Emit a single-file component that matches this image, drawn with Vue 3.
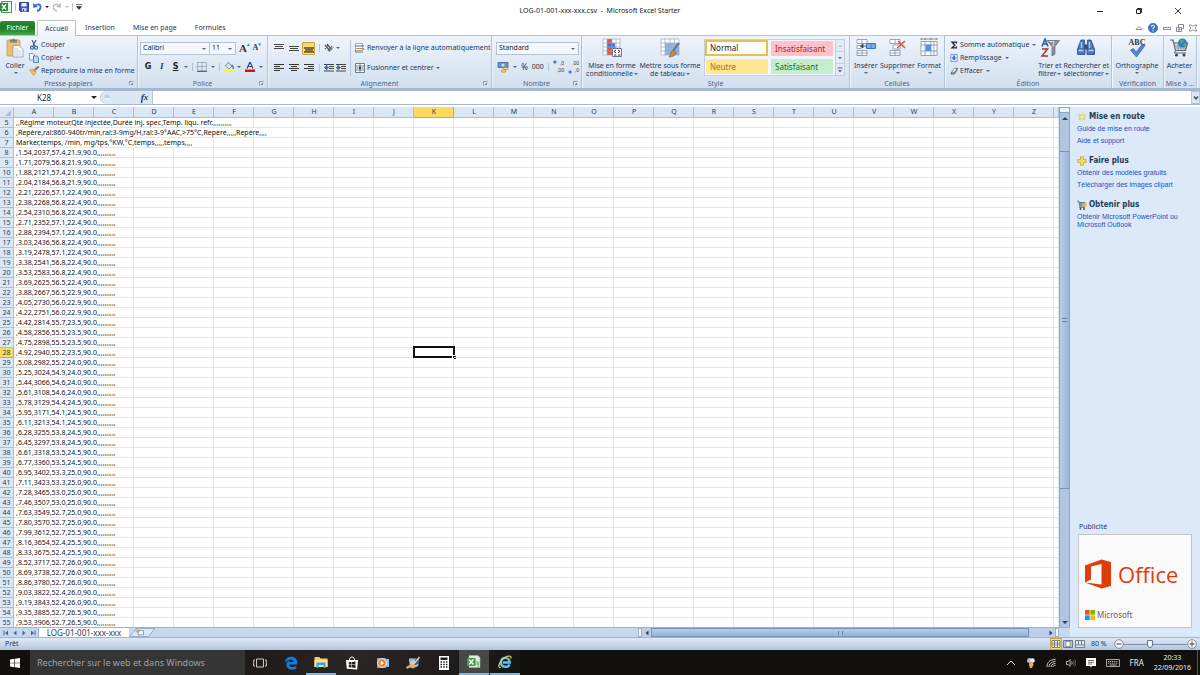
<script setup>
import { ref } from 'vue'

const columns = 'ABCDEFGHIJKLMNOPQRSTUVWXYZ'.split('')
const selectedColumn = 'K'
const selectedRow = 28

const headings = [
  { text: ',,Régime moteur,Qté injectée,Durée inj. spec,Temp. liqu. refr.,,,,,,,,,,', span: 6 },
  { text: ',Repère,ral:860-940tr/min,ral:3-9mg/H,ral:3-9°AAC,>75°C,Repère,,,,,Repère,,,,', span: 7 },
  { text: 'Marker,temps, /min, mg/tps,°KW,°C,temps,,,,,temps,,,,', span: 5 }
]
const measures = [
  '1.54,2037,57.4,21.9', '1.71,2079,56.8,21.9', '1.88,2121,57.4,21.9', '2.04,2184,56.8,21.9',
  '2.21,2226,57.1,22.4', '2.38,2268,56.8,22.4', '2.54,2310,56.8,22.4', '2.71,2352,57.1,22.4',
  '2.88,2394,57.1,22.4', '3.03,2436,56.8,22.4', '3.19,2478,57.1,22.4', '3.38,2541,56.8,22.4',
  '3.53,2583,56.8,22.4', '3.69,2625,56.5,22.4', '3.88,2667,56.5,22.9', '4.05,2730,56.0,22.9',
  '4.22,2751,56.0,22.9', '4.42,2814,55.7,23.5', '4.58,2856,55.5,23.5', '4.75,2898,55.5,23.5',
  '4.92,2940,55.2,23.5', '5.08,2982,55.2,24.0', '5.25,3024,54.9,24.0', '5.44,3066,54.6,24.0',
  '5.61,3108,54.6,24.0', '5.78,3129,54.4,24.5', '5.95,3171,54.1,24.5', '6.11,3213,54.1,24.5',
  '6.28,3255,53.8,24.5', '6.45,3297,53.8,24.5', '6.61,3318,53.5,24.5', '6.77,3360,53.5,24.5',
  '6.95,3402,53.3,25.0', '7.11,3423,53.3,25.0', '7.28,3465,53.0,25.0', '7.46,3507,53.0,25.0',
  '7.63,3549,52.7,25.0', '7.80,3570,52.7,25.0', '7.99,3612,52.7,25.5', '8.16,3654,52.4,25.5',
  '8.33,3675,52.4,25.5', '8.52,3717,52.7,26.0', '8.69,3738,52.7,26.0', '8.86,3780,52.7,26.0',
  '9.03,3822,52.4,26.0', '9.19,3843,52.4,26.0', '9.35,3885,52.7,26.5', '9.53,3906,52.7,26.5'
]
const rows = [
  ...headings,
  ...measures.map((m) => ({ text: `,${m},90.0,,,,,,,,,,`, span: 3 }))
].map((r, i) => ({ ...r, number: i + 5 }))

const cellName = ref('K28')
const formula = ref('')
const font = ref('Calibri')
const size = ref('11')
const format = ref('Standard')
const zoom = ref(40)
const search = ref('')
</script>

<template>
  <div class="desktop">
    <header class="titlebar">
      <div class="quick">
        <svg class="i12" viewBox="0 0 12 12"><rect x="1.5" y=".5" width="10" height="11" fill="#e9f4e7" stroke="#4d9a50" /><rect x="0" y="2" width="8" height="8" fill="#2f8b3b" /><path d="M2 3.5l4 5M6 3.5l-4 5" stroke="#fff" stroke-width="1.3" /></svg>
        <i class="vline"></i>
        <button aria-label="Enregistrer"><svg class="i10" viewBox="0 0 10 10"><path d="M.5.5h9v9h-8l-1-1z" fill="#4a55b8" stroke="#333c90" /><path d="M2.500 1h5v3.500h-5z" fill="#eef2fc" /><path d="M3 6h4.500v3.500H3z" fill="#c6cdea" /><path d="M4 7h1v2H4z" fill="#333c90" /></svg></button>
        <button aria-label="Annuler"><svg class="i10" viewBox="0 0 10 10"><path d="M2.500 4.500C5 1 9 2 8.500 5.500 8.200 7.500 6.500 8.800 5 9" fill="none" stroke="#3f6fc4" stroke-width="1.800" /><path d="M1 1l.3 5L6 4.800z" fill="#3f6fc4" /></svg></button>
        <i class="caret dark"></i>
        <button aria-label="Rétablir"><svg class="i10" viewBox="0 0 10 10"><path d="M7.500 4.500C5 1 1 2 1.500 5.500 1.800 7.500 3.500 8.800 5 9" fill="none" stroke="#b8c0cb" stroke-width="1.500" /><path d="M9 1l-.3 5L4 4.800z" fill="#b8c0cb" /></svg></button>
        <i class="caret pale"></i>
        <i class="vline"></i>
        <svg class="i6" viewBox="0 0 6 6"><path d="M0 .5h6M.5 2.500h5L3 5.500z" fill="#333" stroke="#333" stroke-width=".7" /></svg>
      </div>
      <h1>LOG-01-001-xxx-xxx.csv &nbsp;-&nbsp; Microsoft Excel Starter</h1>
      <div class="winctl">
        <button aria-label="Réduire"><svg class="i8" viewBox="0 0 8 8"><path d="M1 4.500h6" stroke="#222" /></svg></button>
        <button aria-label="Restaurer"><svg class="i8" viewBox="0 0 8 8"><path d="M1.500 2.500h4v4h-4zM2.500 2V1.500h4v4H6" fill="none" stroke="#222" /></svg></button>
        <button aria-label="Fermer"><svg class="i8" viewBox="0 0 8 8"><path d="M1 1l6 6M7 1L1 7" stroke="#222" stroke-width=".9" /></svg></button>
      </div>
    </header>

    <nav class="tabs">
      <button class="file">Fichier</button>
      <button class="tab on">Accueil</button>
      <button class="tab">Insertion</button>
      <button class="tab">Mise en page</button>
      <button class="tab">Formules</button>
      <div class="tabtools">
        <button aria-label="Réduire le ruban"><svg class="i8" viewBox="0 0 8 8"><path d="M1 5.500l3-3 3 3z" fill="#fff" stroke="#67727f" stroke-width=".8" /></svg></button>
        <button aria-label="Aide"><svg class="i10" viewBox="0 0 10 10"><circle cx="5" cy="5" r="4.700" fill="#3b74c9" stroke="#2d5ca8" stroke-width=".5" /><path d="M3.500 3.800C3.500 1.800 6.600 1.900 6.500 3.700 6.400 4.700 5 4.700 5 6M5 7v1.200" fill="none" stroke="#fff" stroke-width="1.100" /></svg></button>
        <button aria-label="Réduire le classeur"><svg class="i8" viewBox="0 0 8 8"><path d="M.5 3.500h7v2h-7z" fill="#fff" stroke="#67727f" stroke-width=".8" /></svg></button>
        <button aria-label="Restaurer le classeur"><svg class="i8" viewBox="0 0 8 8"><path d="M2.500 3V.5h5v4H5.500M.5 3.500h5v4h-5zM2 5h2v1H2z" fill="#fff" stroke="#67727f" stroke-width=".8" /></svg></button>
        <button aria-label="Fermer le classeur"><svg class="i8" viewBox="0 0 8 8"><path d="M.5 1h2L4 2.500 5.500 1h2v1L6 4l1.500 2v1h-2L4 5.500 2.500 7h-2V6L2 4 .5 2z" fill="#fff" stroke="#67727f" stroke-width=".8" /></svg></button>
      </div>
    </nav>

    <div class="ribbon">
      <section class="group g-clip">
        <div class="body">
          <button class="big"><svg class="i20" viewBox="0 0 20 20"><rect x="2" y="2" width="13" height="16" rx="1" fill="#efc06c" stroke="#c29243" stroke-width=".7" /><path d="M5 1.500h2l1.500-1 1.500 1h2v3H5z" fill="#7d8289" /><path d="M8 7.500h6l4 4V19H8z" fill="#fff" stroke="#7e8ea5" stroke-width=".7" /><path d="M9.500 11h4M9.500 13h7M9.500 15h7M9.500 17h7" stroke="#9fb4d4" stroke-width=".7" /></svg><span>Coller</span><i class="caret"></i></button>
          <div class="stack">
            <button><svg class="i10" viewBox="0 0 10 10"><path d="M3 0l3 6M7 0L4 6" stroke="#4b6184" stroke-width="1.200" /><circle cx="3" cy="7.700" r="1.500" fill="none" stroke="#3467b5" stroke-width="1.200" /><circle cx="7" cy="7.700" r="1.500" fill="none" stroke="#3467b5" stroke-width="1.200" /></svg>Couper</button>
            <button><svg class="i10" viewBox="0 0 10 10"><path d="M.5.5h3.500l1.500 1.500v5h-5z" fill="#eef5ff" stroke="#6788b9" stroke-width=".8" /><path d="M4.500 3h3.500L9.500 4.500v5h-5z" fill="#bfd7f8" stroke="#3f68a8" stroke-width=".8" /></svg>Copier<i class="caret"></i></button>
            <button><svg class="i10" viewBox="0 0 10 10"><path d="M9.500.5L6 4" stroke="#8c6a3d" stroke-width="1.800" /><path d="M4 2.500l3.500 3.500-2 1-3-2.500z" fill="#76849a" /><path d="M.5 4l3-1L7 6.500 4.500 9.500z" fill="#f2c44c" stroke="#b98f28" stroke-width=".5" /></svg>Reproduire la mise en forme</button>
          </div>
        </div>
        <footer>Presse-papiers<i class="launch"></i></footer>
      </section>

      <section class="group g-font">
        <div class="body lines">
          <div class="line">
            <span class="fields">
              <span class="pick w-font"><select v-model="font" aria-label="Police"><option>Calibri</option></select><i class="caret"></i></span>
              <span class="pick w-size"><select v-model="size" aria-label="Taille"><option>11</option></select><i class="caret"></i></span>
            </span>
            <button class="letter grow" aria-label="Agrandir">A<sup>▴</sup></button>
            <button class="letter shrink" aria-label="Rétrécir">A<sup>▾</sup></button>
          </div>
          <div class="line spread">
            <button class="fmt"><b>G</b></button>
            <button class="fmt"><em>I</em></button>
            <button class="fmt"><u>S</u></button><i class="caret"></i>
            <i class="vline"></i>
            <button aria-label="Bordures"><svg class="i10" viewBox="0 0 10 10"><path d="M.5.500h9v8h-9zM5 .5v8M.5 4.500h9" fill="none" stroke="#8fa0b5" stroke-width=".8" /><path d="M0 9.500h10" stroke="#444" stroke-width=".8" /></svg></button><i class="caret"></i>
            <i class="vline"></i>
            <button aria-label="Remplissage couleur"><svg class="i10" viewBox="0 0 10 10"><path d="M4 .5l4 3.500-3 3L1.500 4z" fill="#dbe8f9" stroke="#5573a5" stroke-width=".8" /><path d="M7.500 3c1.500.5 2 2 1.500 4" fill="none" stroke="#3262b0" stroke-width="1.200" /><path d="M0 7.500h10V10H0z" fill="#ff0" /></svg></button><i class="caret"></i>
            <button aria-label="Couleur de police"><svg class="i10" viewBox="0 0 10 10"><path d="M2 6.500L4.700.5h.6L8 6.500M3 4.500h4" fill="none" stroke="#2b4a86" stroke-width="1.200" /><path d="M0 7.500h10V10H0z" fill="#f00" /></svg></button><i class="caret"></i>
          </div>
        </div>
        <footer>Police<i class="launch"></i></footer>
      </section>

      <section class="group g-align">
        <div class="body">
          <div class="lines aligns">
            <div class="line">
              <button class="ab" aria-label="Haut"><svg class="i10" viewBox="0 0 10 10"><path d="M0 1.500h10M1 3.500h8M0 5.500h10" stroke="#444" /></svg></button>
              <button class="ab" aria-label="Milieu"><svg class="i10" viewBox="0 0 10 10"><path d="M0 3.500h10M1 5.500h8M0 7.500h10" stroke="#444" /></svg></button>
              <button class="ab pressed" aria-label="Bas"><svg class="i10" viewBox="0 0 10 10"><path d="M0 5h10M1 7h8M0 9h10" stroke="#5c4a1c" stroke-width="1.400" /></svg></button>
              <i class="vline"></i>
              <button aria-label="Orientation"><svg class="i10" viewBox="0 0 10 10"><path d="M1 2l5 6M3 1l5 6M1 6l3-4M4 8l4-5" stroke="#555" stroke-width="1.200" /><path d="M5 9l4.500-5" stroke="#889" /></svg></button><i class="caret"></i>
            </div>
            <div class="line">
              <button class="ab" aria-label="Gauche"><svg class="i10" viewBox="0 0 10 10"><path d="M0 1.500h10M0 3.500h6M0 5.500h10M0 7.500h6" stroke="#333" /></svg></button>
              <button class="ab" aria-label="Centrer"><svg class="i10" viewBox="0 0 10 10"><path d="M0 1.500h10M2 3.500h6M0 5.500h10M2 7.500h6" stroke="#333" /></svg></button>
              <button class="ab" aria-label="Droite"><svg class="i10" viewBox="0 0 10 10"><path d="M0 1.500h10M4 3.500h6M0 5.500h10M4 7.500h6" stroke="#333" /></svg></button>
              <i class="vline"></i>
              <button aria-label="Diminuer le retrait"><svg class="i10" viewBox="0 0 10 10"><path d="M0 1.500h10M5 3.500h5M5 5.500h5M0 8h10" stroke="#444" stroke-width="1.100" /><path d="M5 4.600H2M3 2.500L.5 4.600 3 6.700z" fill="#2f62b8" stroke="#2f62b8" /></svg></button>
              <button class="in" aria-label="Augmenter le retrait"><svg class="i10" viewBox="0 0 10 10"><path d="M0 1.500h10M5 3.500h5M5 5.500h5M0 8h10" stroke="#444" stroke-width="1.100" /><path d="M0 4.600h2M1.800 2.500l2.500 2.100-2.500 2.100z" fill="#2f62b8" stroke="#2f62b8" /></svg></button>
            </div>
          </div>
          <i class="vline tall"></i>
          <div class="lines">
            <div class="line"><button class="txt"><svg class="i10" viewBox="0 0 10 10"><path d="M.5.500h7v9h-7z" fill="#fff" stroke="#8293a9" stroke-width=".7" /><path d="M0 3h9M0 8h7" stroke="#53637b" stroke-width="1.200" /><path d="M1 5.500h7.500v1.500" fill="none" stroke="#d28a42" stroke-width="1.200" /></svg>Renvoyer à la ligne automatiquement</button></div>
            <div class="line"><button class="txt"><svg class="i10" viewBox="0 0 10 10"><path d="M.5.500h9v9h-9zM.5 3h9M.5 7h9M5 .5V3M5 7v2.500" fill="#fff" stroke="#53637b" stroke-width=".8" /><path d="M1.500 5h2M8.500 5h-2" stroke="#2f62b8" /><path d="M4 3.500h2v3H4z" fill="#444" /></svg>Fusionner et centrer<i class="caret"></i></button></div>
          </div>
        </div>
        <footer>Alignement<i class="launch"></i></footer>
      </section>

      <section class="group g-num">
        <div class="body lines">
          <div class="line"><span class="pick w-num"><select v-model="format" aria-label="Format de nombre"><option>Standard</option></select><i class="caret"></i></span></div>
          <div class="line spread">
            <button aria-label="Format comptabilité"><svg class="i12" viewBox="0 0 12 12"><path d="M1 1.500h10v5H1z" fill="#6b8fd0" stroke="#3c5fa5" stroke-width=".8" /><circle cx="6" cy="4" r="1.500" fill="#d8e4fa" /><ellipse cx="8.500" cy="7.500" rx="2.500" ry="1.300" fill="#f7d56c" stroke="#a87b16" stroke-width=".6" /><ellipse cx="6.500" cy="10" rx="2.500" ry="1.300" fill="#f7d56c" stroke="#a87b16" stroke-width=".6" /></svg></button><i class="caret"></i>
            <button class="sym">%</button><button class="sym small">000</button>
            <i class="vline"></i>
            <button aria-label="Ajouter une décimale" class="dec"><svg class="i4" viewBox="0 0 4 4"><path d="M4 2H2M2 .5L.5 2 2 3.500z" fill="#2f62b8" stroke="#2f62b8" stroke-width=".8" /></svg><span class="digits"><span>,0</span><span>,00</span></span></button>
            <button aria-label="Réduire les décimales" class="dec low"><svg class="i4" viewBox="0 0 4 4"><path d="M0 2h2M2 .5L3.500 2 2 3.500z" fill="#2f62b8" stroke="#2f62b8" stroke-width=".8" /></svg><span class="digits"><span>,00</span><span>,0</span></span></button>
          </div>
        </div>
        <footer>Nombre<i class="launch"></i></footer>
      </section>

      <section class="group g-style">
        <div class="body">
          <button class="big wide"><svg class="i20" viewBox="0 0 20 20"><path d="M1 1h17v16H1z" fill="#fff" /><path d="M5 1h5v4H5zM5 13h5v4H5z" fill="#e8513f" /><path d="M5 5h8v4H5z" fill="#3f73d4" /><path d="M5 9h9v4H5z" fill="#e8513f" /><path d="M1 1h17v16H1zM1 5h17M1 9h17M1 13h17M5 1v16M10 1v16M14 1v16" fill="none" stroke="#9aaac2" stroke-width=".7" /><path d="M10.500 10.500h9v8h-9z" fill="#fff" stroke="#6d7886" /><path d="M14 12l-2 1.500 2 1.500M16 12l2 1.500-2 1.500M12 17h2.500M16 17h2.500" fill="none" stroke="#333" /></svg><span>Mise en forme<br>conditionnelle<i class="caret"></i></span></button>
          <button class="big wide"><svg class="i20" viewBox="0 0 20 20"><path d="M1 1h18v16H1z" fill="#fff" /><path d="M5 5h14v12H5z" fill="#8cb2ec" /><path d="M1 1h18v16H1zM1 5h18M1 9h18M1 13h18M5 1v16M10 1v16M14.500 1v16" fill="none" stroke="#9aaac2" stroke-width=".7" /><path d="M19 5l-6 8" stroke="#69717d" stroke-width="2" /><path d="M13 12l3 2c0 4-4 5-7 5 2-2 1-5 4-7z" fill="#c08c42" stroke="#7b6037" stroke-width=".6" /></svg><span>Mettre sous forme<br>de tableau<i class="caret"></i></span></button>
          <div class="gallery">
            <div class="swatches">
              <button class="sw normal">Normal</button><button class="sw bad">Insatisfaisant</button>
              <button class="sw neutral">Neutre</button><button class="sw good">Satisfaisant</button>
            </div>
            <div class="gscroll"><button aria-label="Précédent"><i class="caret up pale"></i></button><button aria-label="Suivant"><i class="caret"></i></button><button aria-label="Plus"><svg class="i6" viewBox="0 0 6 6"><path d="M.5 1h5" stroke="#53647d" /><path d="M1 3h4L3 5.200z" fill="#53647d" /></svg></button></div>
          </div>
        </div>
        <footer>Style</footer>
      </section>

      <section class="group g-cells">
        <div class="body even">
          <button class="big"><svg class="i20" viewBox="0 0 20 20"><path d="M1 1.500h10v4H1zM1 12.500h10v5H1zM6 1.500v4M6 12.500v5M1 15h10M1 7.500h4v3H1z" fill="#fff" stroke="#8291a6" stroke-width=".8" /><path d="M10.500 5.500h9v5h-9z" fill="#80aaf0" stroke="#416fb8" /><path d="M15 5.500v5" stroke="#416fb8" stroke-width=".7" /><path d="M10 8H6M7 6L4.500 8 7 10z" fill="#444" stroke="#444" stroke-width=".8" /></svg><span>Insérer</span><i class="caret"></i></button>
          <button class="big"><svg class="i20" viewBox="0 0 20 20"><path d="M3 1.500h10v4H3zM3 12.500h10v5H3zM8 1.500v4M8 12.500v5M3 15h10M6 7h7v4H6z" fill="#fff" stroke="#8291a6" stroke-width=".8" /><path d="M11 3l7 7M18 3l-8 7" stroke="#ec4b35" stroke-width="1.500" /></svg><span>Supprimer</span><i class="caret"></i></button>
          <button class="big"><svg class="i20" viewBox="0 0 20 20"><path d="M2 3.500h16v14H2zM2 7h16M2 13h16M6 3.500v14M12 3.500v14M15 3.500v14" fill="#fff" stroke="#8291a6" stroke-width=".8" /><path d="M6.500 6.500h5.500v6.500H6.500z" fill="#5d8ee2" /><path d="M2 1h16M2 0v2M18 0v2M6 0v2M12 0v2" stroke="#667" stroke-width=".7" /></svg><span>Format</span><i class="caret"></i></button>
        </div>
        <footer>Cellules</footer>
      </section>

      <section class="group g-edit">
        <div class="body">
          <div class="stack">
            <button><svg class="i8" viewBox="0 0 10 10"><path d="M8 3V1.500H2.500L6 5 2.500 8.500H8V7" fill="none" stroke="#222" stroke-width="1.600" /></svg>Somme automatique<i class="caret"></i></button>
            <button><svg class="i8" viewBox="0 0 10 10"><path d="M1 .5h8v9H1z" fill="#dce9fb" stroke="#4d74b5" stroke-width=".8" /><path d="M4 2h2v2.500h2L5 8 2 4.500h2z" fill="#2f66ce" /></svg>Remplissage<i class="caret"></i></button>
            <button><svg class="i8" viewBox="0 0 10 10"><path d="M5.500 1.500h3.500L5.500 7.500H1.500z" fill="#fff" stroke="#444d5c" stroke-width=".8" /><path d="M1.500 7.500v1.500h4l3.500-5V1.500L5.500 7.500z" fill="#c3cbd7" stroke="#444d5c" stroke-width=".8" /></svg>Effacer<i class="caret"></i></button>
          </div>
          <button class="big"><svg class="i20" viewBox="0 0 20 20"><path d="M2 8.500L5 1l3 7.500M3 6h4" fill="none" stroke="#2b56ad" stroke-width="1.500" /><path d="M2 11h5.500L2 18h6" fill="none" stroke="#a23b36" stroke-width="1.500" /><path d="M7 2.500h12.500L15 8.500V16l-3 2V8.500z" fill="#8d929a" stroke="#5e646d" stroke-width=".7" /><path d="M9 3.500h5l-1 5" fill="none" stroke="#d9dce1" /></svg><span>Trier et<br>filtrer<i class="caret"></i></span></button>
          <button class="big"><svg class="i20" viewBox="0 0 20 20"><path d="M5 2h3.500v3l.5 3v8.500H1.500V11zM15 2h-3.500v3l-.5 3v8.500h7.500V11z" fill="#4b77bb" stroke="#284a85" stroke-width=".8" /><path d="M8.500 6.500h3v5h-3z" fill="#284a85" /><path d="M2.500 12.500h5M12.500 12.500h5M5.500 4v6M13.500 4v6" stroke="#b5d1f5" stroke-width="1.300" /></svg><span>Rechercher et<br>sélectionner<i class="caret"></i></span></button>
        </div>
        <footer>Édition</footer>
      </section>

      <section class="group g-check">
        <div class="body center"><button class="big abc"><small>ABC</small><svg class="i20" viewBox="0 0 20 20"><path d="M3.500 12l3-1.500L9 14l6.500-8L18 7.500 9.500 19z" fill="#4f86e0" stroke="#2f5fb5" stroke-width=".7" /></svg><span>Orthographe</span><i class="caret"></i></button></div>
        <footer>Vérification</footer>
      </section>
      <section class="group g-buy">
        <div class="body center"><button class="big"><svg class="i20" viewBox="0 0 20 20"><path d="M1 2h3l2.500 10.500h10L18.500 5H5" fill="#dfe4ea" stroke="#5f6772" stroke-width="1.200" /><path d="M6 8h12M7 10h10M9 5v7M12 5v7M15 5v7" stroke="#7d8590" stroke-width=".8" /><path d="M6.500 12.500L5.500 15H17" fill="none" stroke="#5f6772" /><circle cx="7.500" cy="17" r="1.500" fill="#444" /><circle cx="15" cy="17" r="1.500" fill="#444" /><circle cx="13.500" cy="5" r="4.500" fill="#2f7bd0" /><path d="M11 3c2-2 4-1 4 0s-2 1-2 2.500-2 0-2-2.500zM14 6l3-1c.5 2-1 3.500-2 4z" fill="#53b552" /></svg><span>Acheter</span><i class="caret"></i></button></div>
        <footer>Mise à ...</footer>
      </section>
    </div>

    <div class="formulabar">
      <input v-model="cellName" class="name" aria-label="Zone de nom">
      <button class="namedrop" aria-label="Liste des noms"><i class="caret dark"></i></button>
      <div class="fxbox"><span class="round"></span><button class="fx" aria-label="Insérer une fonction"><i>f</i>x</button></div>
      <input v-model="formula" class="formula" aria-label="Barre de formule">
      <button class="expand" aria-label="Développer"><svg class="i6" viewBox="0 0 6 6"><path d="M1 1.500l2 2.500 2-2.500" fill="none" stroke="#444" stroke-width="1.300" /></svg></button>
    </div>

    <main>
      <div class="book">
        <div class="sheetrow">
          <div class="sheet">
            <table>
              <colgroup><col class="c-num"><col v-for="c in columns" :key="c" class="c-col"><col></colgroup>
              <thead>
                <tr>
                  <th class="corner"><svg class="i6" viewBox="0 0 6 6"><path d="M6 0v6H0z" fill="#a9bdd6" /></svg></th>
                  <th v-for="c in columns" :key="c" scope="col" :class="{ hot: c === selectedColumn }">{{ c }}</th>
                  <th></th>
                </tr>
              </thead>
              <tbody>
                <tr v-for="r in rows" :key="r.number">
                  <th scope="row" :class="{ hot: r.number === selectedRow }">{{ r.number }}</th>
                  <td :colspan="r.span">{{ r.text }}</td>
                  <td v-for="c in columns.slice(r.span)" :key="c" :class="{ active: c === selectedColumn && r.number === selectedRow }"></td>
                  <td></td>
                </tr>
              </tbody>
            </table>
          </div>
          <div class="vscroll">
            <i class="split"></i>
            <button aria-label="Haut"><i class="caret up navy"></i></button>
            <i class="vgap1"></i><i class="vthumb"><b></b></i><i class="vgap2"></i>
            <button aria-label="Bas"><i class="caret navy"></i></button>
          </div>
        </div>
        <div class="sheettabs">
          <div class="tabside">
            <div class="navs">
              <button aria-label="Première feuille"><svg class="i6" viewBox="0 0 6 6"><path d="M1 .5v5" stroke="#46679b" /><path d="M5 .5v5L2 3z" fill="#46679b" /></svg></button>
              <button aria-label="Feuille précédente"><svg class="i6" viewBox="0 0 6 6"><path d="M4.500.5v5l-3-2.500z" fill="#46679b" /></svg></button>
              <button aria-label="Feuille suivante"><svg class="i6" viewBox="0 0 6 6"><path d="M1.500.5v5l3-2.500z" fill="#46679b" /></svg></button>
              <button aria-label="Dernière feuille"><svg class="i6" viewBox="0 0 6 6"><path d="M5 .5v5" stroke="#46679b" /><path d="M1 .5v5L4 3z" fill="#46679b" /></svg></button>
            </div>
            <button class="sheetname">LOG-01-001-xxx-xxx</button>
            <button class="newsheet" aria-label="Insérer une feuille"><svg viewBox="0 0 30 10"><path d="M-1 9.500L6.500.5H27L20 9.500z" fill="#dce8f6" stroke="#7f9bc2" stroke-width=".8" /><path d="M8.500 3h6v4.500h-6z" fill="#fff" stroke="#5b7db0" stroke-width=".8" /><path d="M8 .8v5M5.500 3.300h5M6.300 1.600l3.400 3.400M9.700 1.600L6.300 5" stroke="#e89a2c" /></svg></button>
          </div>
          <div class="hscroll">
            <i class="hsplit"></i>
            <button aria-label="Gauche"><svg class="i6" viewBox="0 0 6 6"><path d="M4.500.5v5L1.500 3z" fill="#2b4470" /></svg></button>
            <i class="hthumb"><b></b></i><i class="hgap"></i>
            <button aria-label="Droite"><svg class="i6" viewBox="0 0 6 6"><path d="M1.500.5v5l3-2.500z" fill="#2b4470" /></svg></button>
            <i class="hsplit"></i>
          </div>
          <i class="scorner"></i>
        </div>
      </div>

      <aside>
        <section>
          <h2><svg class="i10" viewBox="0 0 10 10"><path d="M2 2l2 2M8 2L6 4M2 8l2-2M8 8L6 6M5 1.500v1.500M5 8.500V7M1.500 5H3M8.500 5H7" stroke="#e6d13c" stroke-width="1.300" /></svg>Mise en route</h2>
          <a href="#">Guide de mise en route</a>
          <a href="#">Aide et support</a>
        </section>
        <section>
          <h2><svg class="i10" viewBox="0 0 10 10"><path d="M3.500.8h3v2.700h2.700v3H6.500v2.700h-3V6.500H.8v-3h2.700z" fill="#f7dc6a" stroke="#c4a02c" stroke-width=".8" /></svg>Faire plus</h2>
          <a href="#">Obtenir des modèles gratuits</a>
          <a href="#">Télécharger des images clipart</a>
        </section>
        <section>
          <h2><svg class="i10" viewBox="0 0 10 10"><path d="M0 1h1.500l1.500 5h4.500L8 2.500H2M2 4h5M4 2.500V6M3 6L2.500 7.500H8" fill="none" stroke="#626c7a" stroke-width=".9" /><circle cx="3.500" cy="9" r=".9" fill="#444" /><circle cx="7" cy="9" r=".9" fill="#444" /><path d="M6 4h1.500V2.500L10 4.800 7.500 7V5.800H6z" fill="#f1cd3e" stroke="#b28d1c" stroke-width=".4" /></svg>Obtenir plus</h2>
          <a href="#">Obtenir Microsoft PowerPoint ou Microsoft Outlook</a>
        </section>
        <div class="adwrap">
          <p>Publicité</p>
          <a href="#" class="ad">
            <span class="office"><svg viewBox="0 0 26 30"><path d="M0 6.500L16.500.5 26 3v24l-9.500 2.500L0 23.500l16.500 2V5L6 7.500v13L0 23.500z" fill="#dc3e0b" /></svg>Office</span>
            <span class="ms"><svg class="i10" viewBox="0 0 10 10"><path d="M0 0h4.700v4.700H0z" fill="#f25022" /><path d="M5.300 0H10v4.700H5.300z" fill="#7fba00" /><path d="M0 5.300h4.700V10H0z" fill="#00a4ef" /><path d="M5.300 5.300H10V10H5.300z" fill="#ffb900" /></svg>Microsoft</span>
          </a>
        </div>
      </aside>
    </main>

    <div class="status">
      <span>Prêt</span>
      <div class="views">
        <button class="on" aria-label="Normal"><svg class="i10" viewBox="0 0 10 10"><path d="M1 1.500h8v7H1zM1 4h8M1 6h8M3.500 1.500v7M6.500 1.500v7" fill="#fff" stroke="#66645a" stroke-width=".8" /></svg></button>
        <button aria-label="Mise en page"><svg class="i10" viewBox="0 0 10 10"><path d="M.5 1.500h9v7h-9z" fill="#b9c2cd" stroke="#5b6470" stroke-width=".8" /><path d="M3 2.500h4v5H3z" fill="#fff" stroke="#5b6470" stroke-width=".6" /></svg></button>
        <button aria-label="Sauts de page"><svg class="i10" viewBox="0 0 10 10"><path d="M.5 1.500h9v7h-9z" fill="#e5eaf0" stroke="#5b6470" stroke-width=".8" /><path d="M3.500 1.500V6M6.500 1.500V6M.5 6h9" fill="none" stroke="#5b6470" stroke-width=".8" /></svg></button>
      </div>
      <span class="pct">80 %</span>
      <button class="zb" aria-label="Zoom arrière"><svg class="i10" viewBox="0 0 10 10"><circle cx="5" cy="5" r="4.300" fill="#f4f7fb" stroke="#66758a" stroke-width=".8" /><path d="M2.500 5h5" stroke="#444" /></svg></button>
      <input v-model="zoom" type="range" min="0" max="100" aria-label="Zoom">
      <button class="zb" aria-label="Zoom avant"><svg class="i10" viewBox="0 0 10 10"><circle cx="5" cy="5" r="4.300" fill="#f4f7fb" stroke="#66758a" stroke-width=".8" /><path d="M2.500 5h5M5 2.500v5" stroke="#444" /></svg></button>
    </div>

    <div class="taskbar">
      <button class="start" aria-label="Démarrer"><svg class="i10" viewBox="0 0 10 10"><path d="M0 1.500l4.300-.7v4H0zM4.900.7L10 0v4.800H4.900zM0 5.300h4.300v4L0 8.600zM4.900 5.300H10V10l-5.100-.7z" fill="#fff" /></svg></button>
      <input v-model="search" class="search" placeholder="Rechercher sur le web et dans Windows" aria-label="Rechercher">
      <div class="apps">
        <button aria-label="Affichage des tâches"><svg class="i14" viewBox="0 0 14 14"><path d="M3.500 3h7v8h-7zM2 4H.7v6H2M12 4h1.300v6H12" fill="none" stroke="#ddd" stroke-width=".9" /></svg></button>
        <button aria-label="Edge"><svg class="i14" viewBox="0 0 14 14"><path d="M.8 6.500C1.500 2.500 4 .8 7.200.8c4 0 6 2.700 6 6v1.600H5c.2 2.700 4.500 3.300 7.200 1.600v2.700c-4.500 2.200-9.800.6-9.800-4.200 0-2.400 1.600-4 3.400-4.700-.6.7-.9 1.400-.9 2.200h4.500c0-3.400-5-3.600-8.600.5z" fill="#0d80dc" /></svg></button>
        <button class="open" aria-label="Explorateur"><svg class="i14" viewBox="0 0 14 14"><path d="M.5 2h5l1 1.500h7V12H.5z" fill="#f4ce64" /><path d="M.5 5h13v7H.5z" fill="#fbe29a" /><path d="M2.500 7.500h9V13H9.500v-3h-5v3h-2z" fill="#35a4e2" /></svg></button>
        <button aria-label="Store"><svg class="i14" viewBox="0 0 14 14"><path d="M1 4h12l-.8 9.500L1.800 12.800z" fill="#fff" /><path d="M4.500 4c0-4 5-4 5 0" fill="none" stroke="#fff" /><path d="M3.800 6.200l2.700-.3v2.600H3.800zM7 5.900l3.500-.3v2.900H7zM3.800 9h2.700v2.500l-2.700-.3zM7 9h3.500v3L7 11.600z" fill="#222" /></svg></button>
        <button aria-label="Lecteur multimédia"><svg class="i14" viewBox="0 0 14 14"><path d="M1 2h9v10H1z" fill="#6ba9dc" /><path d="M10 3h3v8h-3z" fill="#93c4ea" /><circle cx="6" cy="7" r="4.300" fill="#ef7d24" stroke="#fff" stroke-width=".8" /><path d="M4.700 4.700v4.600L8.500 7z" fill="#fff" /></svg></button>
        <button aria-label="Dessin"><svg class="i14" viewBox="0 0 14 14"><path d="M3 2.500h10v7.500H3z" fill="#2c5ca8" /><path d="M3 2.500h7l-2 3-5 1z" fill="#86b8ea" /><path d="M4 6l4-2 2 2-3 3H4z" fill="#e9c796" /><path d="M0 11l5-3 4 1 3-1v2l-5 2.500-3-1-3 1.500z" fill="#d8b07a" /><path d="M13.500 1L7 9" stroke="#f3d46b" stroke-width="1.400" /></svg></button>
        <button aria-label="Calculatrice"><svg class="i14" viewBox="0 0 14 14"><path d="M2 0h10v14H2z" fill="#fff" /><path d="M3.500 1.500h7v2.500h-7z" fill="#1d1d1d" /><path d="M3.500 6h7M3.500 8.500h7M3.500 11h7" stroke="#1d1d1d" stroke-width="1.300" stroke-dasharray="1.500 1.200" /></svg></button>
        <button class="open current" aria-label="Excel"><svg class="i14" viewBox="0 0 14 14"><path d="M2 .5h9l2 2v10H2z" fill="#dff0dc" stroke="#8abf88" stroke-width=".6" /><path d="M0 3h8.500v8H0z" fill="#3b9b46" /><path d="M2 4.500l4.500 5M6.500 4.500L2 9.500" stroke="#fff" stroke-width="1.500" /><path d="M9 7h3M9 9h3M11 8v5" stroke="#53a75a" stroke-width=".9" /></svg></button>
        <button class="open" aria-label="Internet Explorer"><svg class="i14" viewBox="0 0 14 14"><path d="M11.500 9.500c-1.200 3.300-8.500 3.500-8.500-2.300s8.500-5.700 8.700.3H5" fill="none" stroke="#58c4f2" stroke-width="2.400" /><path d="M13 3.500C13.500-.8 7.500 1 3.500 5.300.8 8.500-.5 13.300 2.800 12.500" fill="none" stroke="#f4ca36" stroke-width="1.200" /></svg></button>
      </div>
      <div class="tray">
        <button aria-label="Icônes cachées"><svg class="i10" viewBox="0 0 10 10"><path d="M1 7l4-4 4 4" fill="none" stroke="#ddd" /></svg></button>
        <button aria-label="Périphérique"><svg class="i10" viewBox="0 0 10 10"><circle cx="3.500" cy="2.500" r="2.500" fill="#b8bcc2" /><circle cx="6.500" cy="2.500" r="2.300" fill="#eef0f2" /><path d="M3.500 3.500h3l1 3-1.500 3.500H4L3 7z" fill="#f2a865" /></svg></button>
        <button aria-label="Réseau"><svg class="i10" viewBox="0 0 10 10"><path d="M1 9C1 4 4 1.500 9.500 1.500M3 9c0-3 2.500-5.500 6.500-5.500M5 9c0-2 1.500-3.500 4.500-3.500M7 9c0-1 .8-1.700 2.500-1.700" fill="none" stroke="#ddd" stroke-width=".9" /></svg></button>
        <button aria-label="Volume"><svg class="i10" viewBox="0 0 10 10"><path d="M.5 3.500h1.500l2-2v7l-2-2H.5z" fill="none" stroke="#ddd" stroke-width=".8" /><path d="M5.500 3.500c.8.800.8 2.200 0 3" fill="none" stroke="#ddd" stroke-width=".8" /><path d="M7 2.500c1.500 1.500 1.500 3.500 0 5M8.500 1.500c2 2 2 5 0 7" fill="none" stroke="#888" stroke-width=".8" /></svg></button>
        <button aria-label="Notifications"><svg class="i10" viewBox="0 0 10 10"><path d="M0 0h10v8H6L4.500 10V8H0z" fill="#fff" /><path d="M2 2.500h6M2 4.300h6M2 6h4" stroke="#333" stroke-width=".7" /></svg></button>
        <button class="kbd" aria-label="Clavier"><svg viewBox="0 0 14 8"><path d="M.5.5h13v7H.5z" fill="none" stroke="#ccc" stroke-width=".8" /><path d="M2 2.500h10M2 4.200h10" stroke="#ccc" stroke-width=".9" stroke-dasharray="1.200 .7" /><path d="M3.500 6h7" stroke="#ccc" stroke-width=".9" /></svg></button>
        <button class="lang">FRA</button>
        <button class="clock">20:33<br>22/09/2016</button>
        <i class="peek"></i>
      </div>
    </div>
  </div>
</template>

<style>
html, body { margin: 0; background: #fff; }
body { overflow: hidden; }
</style>

<style scoped>
.desktop { height: 100vh; display: flex; flex-direction: column; font: 7px/8px "Noto Sans", "Open Sans", sans-serif; color: #1e395b; background: #fff; }
.desktop * { box-sizing: border-box; }
button, input, select { font: inherit; color: inherit; border: 0; padding: 0; margin: 0; background: none; border-radius: 0; outline: 0; }
button { display: flex; align-items: center; justify-content: center; white-space: nowrap; }
svg { display: block; flex: none; }
a { color: #1c4fc4; text-decoration: none; }
.i4 { width: 4px; height: 4px; }
.i6 { width: 6px; height: 6px; }
.i8 { width: 8px; height: 8px; }
.i10 { width: 10px; height: 10px; }
.i12 { width: 12px; height: 12px; }
.i14 { width: 14px; height: 14px; }
.i20 { width: 20px; height: 20px; }
.caret { display: inline-block; flex: none; width: 0; height: 0; border: 2px solid transparent; border-top-color: #53647d; border-bottom: 0; }
.caret.dark { border-top-color: #222; border-width: 3px; border-bottom: 0; }
.caret.pale { border-top-color: #b8c0cb; }
.caret.navy { border-width: 3px; border-bottom: 0; border-top-color: #2b4470; }
.caret.up { transform: rotate(180deg); }
.vline { flex: none; width: 1px; height: 8px; background: #b5c4d8; }
.vline.tall { height: 36px; }

.titlebar { flex: none; height: 20px; display: grid; grid-template-columns: 1fr auto 1fr; align-items: center; color: #222; }
.titlebar h1 { margin: 0; padding-top: 1px; font-size: 7px; font-weight: 400; }
.quick { display: flex; align-items: center; gap: 3px; padding-bottom: 6px; }
.quick .caret.dark { border-width: 2px; border-bottom: 0; }
.winctl { display: flex; justify-content: flex-end; gap: 31px; padding: 2px 18px 0 0; }

.tabs { flex: none; height: 16px; display: flex; align-items: stretch; border-bottom: 1px solid #b4c3d8; }
.file { width: 35px; margin-top: 1px; color: #fff; background: linear-gradient(#2c8a30, #1c7a22 50%, #4aa648); border-radius: 2px 2px 0 0; }
.tab { padding: 0 9px; }
.tab.on { margin: 0 0 -1px 2px; padding: 0 7px; border: 1px solid #b4c3d8; border-bottom: 0; border-radius: 2px 2px 0 0; background: linear-gradient(#fff, #eef4fb); }
.tabtools { margin-left: auto; display: flex; align-items: center; gap: 5px; padding-right: 3px; }

.ribbon { flex: none; height: 55px; display: flex; background: linear-gradient(#eef4fb, #dfe9f5 50%, #d3e0ef); border-bottom: 3px solid #a6b8cf; padding-right: 3px; }
.group { flex: none; display: flex; flex-direction: column; border-right: 1px solid #b2c2d6; box-shadow: 1px 0 #f1f6fc; min-width: 0; }
.g-clip { width: 138px; } .g-font { width: 130px; } .g-align { width: 224px; } .g-num { width: 90px; }
.g-style { width: 268px; } .g-cells { width: 95px; } .g-edit { width: 167px; } .g-check { width: 52px; }
.g-buy { flex: 1; }
.group footer { position: relative; height: 10px; line-height: 12px; text-align: center; color: #4e6384; white-space: nowrap; }
.launch { position: absolute; right: 3px; top: 3px; width: 5px; height: 5px; border: 1px solid #8fa0b8; border-right-color: transparent; border-bottom-color: transparent; background: linear-gradient(135deg, transparent 60%, #71839d 60%); }
.body { flex: 1; display: flex; padding: 2px 2px 0 1px; min-height: 0; }
.body.center { justify-content: center; }
.body.even { justify-content: space-between; padding: 2px 3px 0 4px; }
.big { flex: none; flex-direction: column; justify-content: flex-start; text-align: center; position: relative; }
.big > span { margin-top: 4px; }
.big > .caret { margin-top: 2px; }
.big .caret { vertical-align: middle; margin-left: 1px; }
.g-clip .big { width: 28px; }
.wide { width: 58px; }
.abc small { position: absolute; top: 0; font: bold 8px/9px "Liberation Serif", serif; color: #333; }
.stack { display: flex; flex-direction: column; justify-content: space-around; align-items: flex-start; }
.stack button, .txt { gap: 2px; }
.stack .caret { margin-left: 1px; }
.g-edit .body { justify-content: space-between; padding-left: 5px; }

.lines { display: flex; flex-direction: column; justify-content: flex-start; gap: 4px; }
.body.lines { padding-top: 4px; gap: 3px; }
.g-align .body { padding: 4px 4px 0; gap: 4px; }
.line { display: flex; align-items: center; height: 16px; gap: 3px; }
.line.spread { justify-content: space-between; padding: 0 2px 0 4px; }
.g-num .line.spread { gap: 1px; padding-right: 0; }
.fields { display: flex; }
.pick { position: relative; display: flex; height: 13px; border: 1px solid #b3c3d8; background: #f4f8fd; }
.pick + .pick { border-left: 0; }
.pick select { appearance: none; width: 100%; padding-left: 2px; color: #222; }
.pick .caret { position: absolute; right: 3px; top: 5px; pointer-events: none; }
.w-font { width: 70px; margin-left: 1px; } .w-size { width: 26px; } .w-num { width: 83px; margin-left: 3px; }
.letter { font: bold 11px/12px "Liberation Serif", serif; color: #333; }
.letter.shrink { font-size: 8px; }
.letter sup { font: 5px/5px "DejaVu Sans", sans-serif; color: #2f62b8; align-self: flex-start; }
.fmt { width: 10px; font: 8px/10px "DejaVu Sans", sans-serif; color: #222; }
.fmt u { font-weight: 700; }
.fmt em { font-family: "Liberation Serif", serif; font-weight: 700; }
.aligns { width: 77px; }
.aligns .line { gap: 2px; }
.ab { width: 13px; height: 13px; }
.aligns .vline { margin: 0 2px; }
.pressed { background: linear-gradient(#fbd66a, #fce575); border: 1px solid #c9a143; border-radius: 1px; }
.sym { color: #333; font-size: 8px; }
.sym.small { font-size: 7px; }
.dec { color: #333; font: 5px/7px "Liberation Sans", sans-serif; align-items: flex-start; }
.digits { display: flex; flex-direction: column; align-items: flex-end; }
.dec.low { align-items: flex-end; }

.gallery { flex: 1; display: flex; margin: 1px 2px 2px 5px; border: 1px solid #c0cfe1; background: #f1f6fc; }
.swatches { flex: 1; display: grid; grid-template-columns: 1fr 1fr; grid-template-rows: 1fr 1fr; gap: 2px 2px; padding: 0 2px 1px 0; font-size: 8px; }
.sw { justify-content: flex-start; padding-left: 4px; margin: 1px 0 0 1px; }
.normal { background: #fff; border: 2px solid #eac047; color: #222; margin: 0; padding-left: 3px; }
.bad { background: #ffc2ca; color: #ae1c24; }
.neutral { background: #ffe794; color: #a56c14; }
.good { background: #c4edcb; color: #14711e; }
.gscroll { width: 9px; display: flex; flex-direction: column; border-left: 1px solid #c0cfe1; background: #e2ebf6; }
.gscroll button { flex: 1; }
.gscroll button + button { border-top: 1px solid #c0cfe1; }

.formulabar { flex: none; height: 14px; margin-bottom: 2px; display: flex; background: #fff; border-bottom: 1px solid #a7b9d0; color: #222; }
.name { width: 88px; text-align: center; font-size: 8px; }
.namedrop { width: 12px; }
.fxbox { width: 53px; display: flex; justify-content: space-between; align-items: center; border: 1px solid #b4c5da; border-width: 0 1px; border-radius: 7px 0 0 7px; background: #dbe7f5; padding: 0 4px 0 3px; }
.round { width: 6px; height: 6px; border-radius: 50%; background: #c1cedf; border-bottom: 3px solid #e7eff9; }
.fx { font: italic bold 8px/10px "Liberation Serif", serif; color: #26344a; }
.fx i { font-size: 10px; }
.formula { flex: 1; min-width: 0; padding: 0 3px; }
.expand { width: 9px; background: #dbe7f5; border: 1px solid #b4c5da; }

main { flex: 1; min-height: 0; display: flex; background: #dce9f8; }
.book { flex: 1; min-width: 0; display: flex; flex-direction: column; }
.sheetrow { flex: 1; min-height: 0; display: flex; }
.sheet { flex: 1; min-width: 0; overflow: hidden; background: #fff; }
table { width: 100%; table-layout: fixed; border-collapse: separate; border-spacing: 0; }
.c-num { width: 14px; } .c-col { width: 40px; }
tr { height: 10px; }
thead tr { height: 11px; }
th, td { padding: 0; height: 10px; line-height: 9px; border-right: 1px solid #e4e6e9; border-bottom: 1px solid #e4e6e9; white-space: nowrap; }
th { font-weight: 400; text-align: center; color: #2a4162; background: #dbe7f4; border-color: #a9bed8; }
thead th { height: 11px; line-height: 10px; padding-left: 1px; }
td { color: #111; padding-left: 2px; position: relative; }
.corner svg { margin: 2px 2px 0 auto; }
th.hot { background: #fdd95f; border-color: #d8a63c; }
.active::before { content: ""; position: absolute; inset: -2px -2px -1px -1px; border: 2px solid #111; }
.active::after { content: ""; position: absolute; right: -3px; bottom: -2px; width: 3px; height: 3px; background: #111; box-shadow: -1px -1px #fff; }

.vscroll { flex: none; width: 11px; display: flex; flex-direction: column; background: #afc5e0; border: 1px solid #8ba5c6; border-width: 0 1px; }
.split { height: 6px; background: #eef4fb; border: 1px solid #8ba5c6; border-width: 1px 0; }
.vscroll button { height: 10px; }
.vgap1 { flex: 28; }
.vthumb { flex: 337; display: flex; justify-content: center; align-items: center; border: 1px solid #7492ba; border-width: 1px 0; background: linear-gradient(90deg, #b9d0ea, #98b4d8); }
.vthumb b { width: 5px; height: 4px; border: 1px solid #6c86ab; border-width: 1px 0; }
.vgap2 { flex: 129; }

.sheettabs { flex: none; height: 10px; display: flex; background: #c6d8ee; border-top: 1px solid #9db4d1; }
.tabside { flex: 638; min-width: 0; display: flex; }
.navs { width: 39px; display: flex; justify-content: space-around; padding: 0 1px; border-right: 1px solid #9db4d1; }
.sheetname { width: 90px; font-size: 8px; color: #1e395b; background: #fff; }
.newsheet svg { width: 30px; height: 9px; }
.hscroll { flex: 421; display: flex; align-items: stretch; background: #bccfe7; }
.hsplit { width: 4px; background: #f3f7fc; border: 1px solid #9db4d1; }
.hscroll button { width: 9px; }
.hthumb { flex: 376; display: flex; justify-content: center; align-items: center; border: 1px solid #7492ba; background: linear-gradient(#b5cde8, #96b3d7); }
.hthumb b { width: 5px; height: 4px; border: 1px solid #6c86ab; border-width: 0 1px; }
.hgap { flex: 17; }
.scorner { width: 11px; }

aside { flex: none; width: 130px; padding: 6px 8px 9px 7px; display: flex; flex-direction: column; }
aside section { margin-bottom: 12px; display: flex; flex-direction: column; gap: 4px; }
h2 { margin: 0; display: flex; align-items: center; gap: 2px; height: 8px; font: bold 8px/8px "DejaVu Sans Condensed", "DejaVu Sans", sans-serif; color: #1e395b; }
aside section a { font-family: "Liberation Sans", sans-serif; line-height: 8px; }
.adwrap { margin-top: auto; }
.adwrap p { margin: 0 0 3px 2px; }
.ad { display: flex; flex-direction: column; justify-content: space-between; height: 94px; margin-left: 1px; padding: 24px 6px 7px; background: #fafafa; border: 1px solid #c2c6cb; }
.office { display: flex; align-items: center; gap: 7px; font: 22px/30px "Open Sans", sans-serif; color: #dc3e0b; }
.office svg { width: 26px; height: 30px; }
.ms { display: flex; align-items: center; gap: 2px; font-size: 8px; line-height: 10px; color: #666; }

.status { flex: none; height: 13px; display: flex; align-items: center; padding: 0 3px 0 5px; border-top: 1px solid #9db4d1; background: linear-gradient(#dee9f6, #b3c5dc); }
.views { margin-left: auto; display: flex; }
.views button { width: 12px; height: 12px; }
.views .on { background: #fddc69; border: 1px solid #d3a43c; }
.pct { margin: 0 7px 0 5px; width: 16px; white-space: nowrap; }
.status input { appearance: none; width: 63px; height: 10px; background: linear-gradient(#7e90a9, #7e90a9) center / 100% 1px no-repeat; }
.status input::-webkit-slider-thumb { appearance: none; width: 6px; height: 8px; background: #f4f7fb; border: 1px solid #66758a; border-radius: 0 0 3px 3px; }

.taskbar { flex: none; height: 25px; display: flex; align-items: stretch; background: #12100f; color: #eee; }
.start { width: 30px; }
.search { width: 215px; padding: 0 7px; background: #353535; font-size: 9px; }
.search::placeholder { color: #a0a0a0; opacity: 1; }
.apps { width: 275px; display: flex; justify-content: space-between; background: linear-gradient(110deg, #1d1a18, #2a2625 40%, #171514); }
.apps button { width: 30px; }
.apps .open { border-bottom: 2px solid #76b9ed; padding-top: 1px; }
.apps .current { background: #484848; width: 30px; }
.tray { margin-left: auto; display: flex; align-items: center; gap: 10px; }
.kbd svg { width: 14px; height: 8px; }
.lang { font-size: 8px; }
.clock { display: block; margin-right: -4px; font-size: 7px; line-height: 10px; text-align: center; }
.peek { align-self: stretch; width: 3px; border-left: 1px solid #555; }
</style>
